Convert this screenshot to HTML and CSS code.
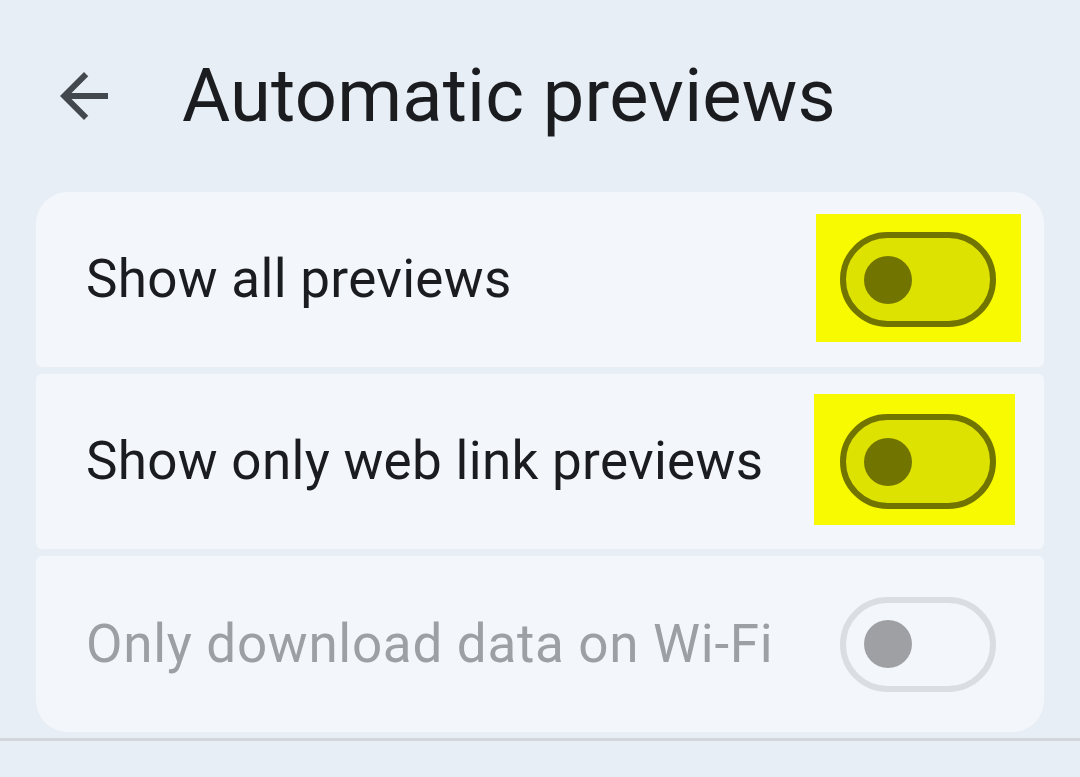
FILE: index.html
```html
<!DOCTYPE html>
<html lang="en">
<head>
<meta charset="utf-8">
<title>Automatic previews</title>
<link rel="stylesheet" href="styles.css">
</head>
<body>
<header class="topbar">
  <svg class="back" viewBox="0 0 24 24" aria-hidden="true">
    <path d="M20 11H7.83l5.59-5.59L12 4l-8 8 8 8 1.41-1.41L7.83 13H20v-2z"/>
  </svg>
  <h1 class="title">Automatic previews</h1>
</header>
<main class="list">
  <div class="card card-first">
    <span class="label">Show all previews</span>
    <span class="hl hl-a"><span class="toggle toggle-hl"><span class="thumb"></span></span></span>
  </div>
  <div class="card card-mid">
    <span class="label">Show only web link previews</span>
    <span class="hl hl-b"><span class="toggle toggle-hl"><span class="thumb"></span></span></span>
  </div>
  <div class="card card-last">
    <span class="label label-off">Only download data on Wi-Fi</span>
    <span class="toggle toggle-off"><span class="thumb"></span></span>
  </div>
</main>
<div class="divider"></div>
</body>
</html>
```
FILE: styles.css
```css
html, body {
  margin: 0;
  padding: 0;
}
body {
  width: 1080px;
  height: 777px;
  overflow: hidden;
  background: #e8eef6;
  font-family: Roboto, "Noto Sans", sans-serif;
  color: #1b1c1f;
}
.topbar {
  height: 192px;
  display: flex;
  align-items: center;
  padding-left: 48px;
  box-sizing: border-box;
}
.back {
  width: 72px;
  height: 72px;
  fill: #43474e;
  flex: none;
}
.title {
  margin: 0 0 0 62px;
  font-size: 74px;
  font-weight: 400;
  line-height: 1;
  letter-spacing: 0.2px;
  color: #1b1c1f;
}
.list {
  padding: 0 36px;
  display: flex;
  flex-direction: column;
  gap: 7px;
}
.card {
  height: 175px;
  background: #f3f7fc;
  display: flex;
  align-items: center;
  justify-content: space-between;
  padding: 0 48px 0 50px;
  border-radius: 6px;
}
.card-first {
  border-radius: 32px 32px 6px 6px;
}
.card-last {
  height: 176px;
  border-radius: 6px 6px 32px 32px;
}
.label {
  font-size: 53px;
  line-height: 1;
  letter-spacing: 0.3px;
  color: #1b1c1f;
}
.label-off {
  color: #9c9fa4;
  letter-spacing: 0.7px;
}
.hl {
  display: flex;
  background: #f7fa00;
}
.hl-a {
  padding: 18px 25px 15px 24px;
  margin: -18px -25px -15px -24px;
}
.hl-b {
  padding: 20px 19px 16px 26px;
  margin: -20px -19px -16px -26px;
}
.toggle {
  width: 156px;
  height: 95px;
  box-sizing: border-box;
  border-radius: 48px;
  border: 6px solid;
  display: flex;
  align-items: center;
  padding-left: 18px;
}
.thumb {
  width: 48px;
  height: 48px;
  border-radius: 50%;
}
.toggle-hl {
  background: #dde200;
  border-color: #727400;
}
.toggle-hl .thumb {
  background: #727400;
}
.toggle-off {
  background: #f3f7fc;
  border-color: #dadde2;
}
.toggle-off .thumb {
  background: #9ea0a4;
}
.divider {
  height: 3px;
  margin-top: 6px;
  background: #d2d6dc;
}
```
